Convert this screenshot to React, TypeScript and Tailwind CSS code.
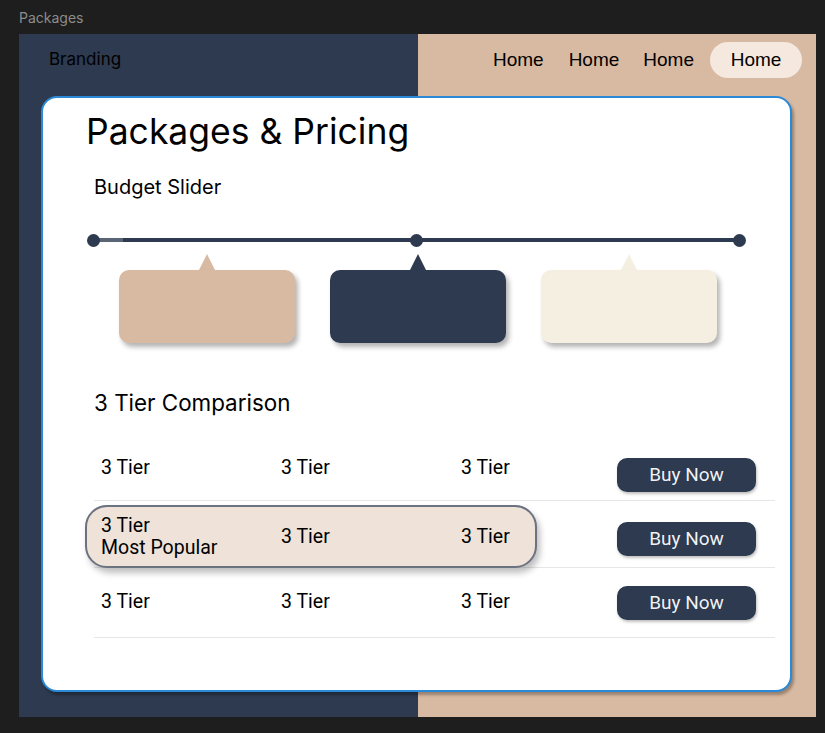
const inter = "font-['Inter','Noto_Sans',sans-serif]";
const roboto = "font-['Roboto','Liberation_Sans',sans-serif]";

function Row({ first, highlight }: { first?: boolean; highlight?: boolean }) {
  const btn =
    "w-[139px] h-[34px] rounded-[10px] bg-[#2d3a4f] text-white/95 text-[19px] flex items-center justify-center shadow-[1px_2px_3px_rgba(0,0,0,0.25)]";
  if (highlight) {
    return (
      <div className="h-[67px] flex items-start border-b border-[#e6e6e6]">
        <div className="ml-[-9px] mt-[4px] w-[452px] h-[63px] rounded-[22px] border-2 border-[#6b7280] bg-[#efe2d9] shadow-[3px_5px_6px_rgba(0,0,0,0.25)] flex items-center pl-[14px] text-[19.5px] text-black">
          <div className="w-[180px] leading-[22px]">
            <div>3 Tier</div>
            <div>Most Popular</div>
          </div>
          <div className="w-[180px]">3 Tier</div>
          <div>3 Tier</div>
        </div>
        <div className={`ml-[80px] mt-[21px] ${btn}`}>Buy Now</div>
      </div>
    );
  }
  return (
    <div className={`${first ? 'h-[57px]' : 'h-[70px]'} flex items-start border-b border-[#e6e6e6]`}>
      <div className={`flex pl-[7px] text-[19.5px] leading-[28px] text-black ${first ? 'mt-[10px]' : 'mt-[20px]'}`}>
        <div className="w-[180px]">3 Tier</div>
        <div className="w-[180px]">3 Tier</div>
        <div className="w-[156px]">3 Tier</div>
      </div>
      <div className={`${first ? 'mt-[14px]' : 'mt-[18px]'} ${btn}`}>Buy Now</div>
    </div>
  );
}

function Bubble({ color }: { color: string }) {
  return (
    <div className="flex flex-col items-center w-[176px]">
      <div
        className={`w-0 h-0 border-l-[8px] border-r-[8px] border-b-[16px] border-l-transparent border-r-transparent ${color === 'tan' ? 'border-b-[#d8b9a1]' : color === 'navy' ? 'border-b-[#2d3a4f]' : 'border-b-[#f5efe1]'}`}
      />
      <div
        className={`w-[176px] h-[73px] rounded-[10px] shadow-[3px_4px_5px_rgba(0,0,0,0.3)] ${color === 'tan' ? 'bg-[#d8b9a1]' : color === 'navy' ? 'bg-[#2d3a4f]' : 'bg-[#f5efe1]'}`}
      />
    </div>
  );
}

export default function App() {
  return (
    <div className={`w-[825px] h-[733px] bg-[#1e1e1e] overflow-hidden ${inter}`}>
      <div className="h-[34px] pl-[19px] flex items-center text-[14px] text-[#8c8c8c]">Packages</div>

      <div className="ml-[19px] w-[797px] h-[683px] bg-[linear-gradient(to_right,#2d3a4f_399px,#d8b9a1_399px)]">
        {/* Header */}
        <div className="h-[50px] flex items-center pl-[30px] pr-[14px] pt-[2px]">
          <span className="text-[17px] text-black">Branding</span>
          <nav className="ml-auto flex items-center font-['Liberation_Sans',Arial,sans-serif] text-[19px] text-black">
            <span className="mr-[25px]">Home</span>
            <span className="mr-[24px]">Home</span>
            <span className="mr-[16px]">Home</span>
            <span className="h-[36px] w-[92px] rounded-full bg-[#f5e8df] flex items-center justify-center">Home</span>
          </nav>
        </div>

        {/* Card */}
        <div className="ml-[22px] mt-[12px] w-[751px] h-[596px] rounded-[16px] border-2 border-[#2a8ad8] bg-white shadow-[2px_3px_3px_rgba(0,0,0,0.3)]">
          <h1 className="ml-[43px] mt-[14px] text-[35.5px] leading-[40px] text-black">Packages &amp; Pricing</h1>
          <div className="ml-[51px] mt-[23px] text-[20px] leading-[24px] text-black">Budget Slider</div>

          {/* Slider */}
          <div className="relative ml-[44px] mt-[35px] w-[659px] h-[12px] flex items-center justify-between">
            <div className="absolute left-[6px] right-[6px] top-[4px] h-[3.5px] bg-[#2d3a4f]" />
            <div className="absolute left-[6px] w-[30px] top-[4px] h-[3.5px] bg-[#5a6474]" />
            <div className="relative w-[13px] h-[13px] rounded-full bg-[#2d3a4f]" />
            <div className="relative w-[13px] h-[13px] rounded-full bg-[#2d3a4f]" />
            <div className="relative w-[13px] h-[13px] rounded-full bg-[#2d3a4f]" />
          </div>

          <div className="ml-[76px] mt-[8px] flex gap-[35px]">
            <Bubble color="tan" />
            <Bubble color="navy" />
            <Bubble color="cream" />
          </div>

          <div className="ml-[51px] mt-[47px] text-[22.4px] leading-[26px] text-black">3 Tier Comparison</div>

          {/* Table */}
          <div className={`ml-[51px] mt-[28px] w-[681px] ${roboto}`}>
            <Row first />
            <Row highlight />
            <Row />
          </div>
        </div>
      </div>
    </div>
  );
}
